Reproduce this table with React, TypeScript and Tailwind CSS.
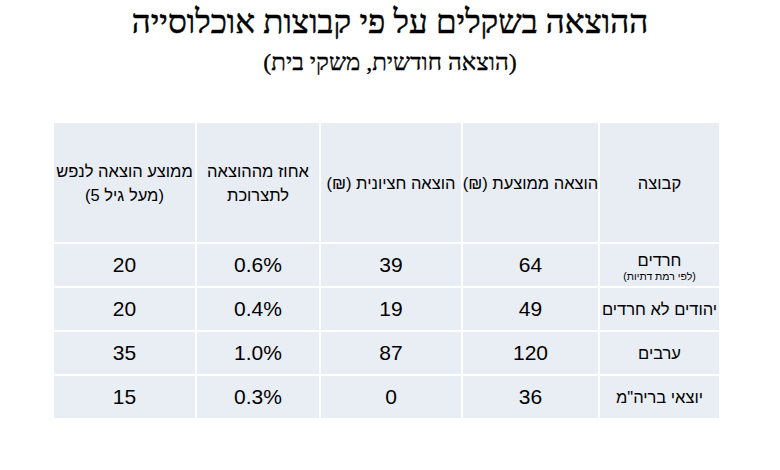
const columns = [
  { w: 'w-[121px]', lines: ['קבוצה'] },
  { w: 'w-[137px]', lines: ['הוצאה ממוצעת (₪)'] },
  { w: 'w-[142px]', lines: ['הוצאה חציונית (₪)'] },
  { w: 'w-[124px]', lines: ['אחוז מההוצאה', 'לתצרוכת'] },
  { w: 'w-[141px]', lines: ['ממוצע הוצאה לנפש', '(מעל גיל 5)'] },
];

const rows = [
  { group: 'חרדים', note: '(לפי רמת דתיות)', values: ['64', '39', '0.6%', '20'] },
  { group: 'יהודים לא חרדים', values: ['49', '19', '0.4%', '20'] },
  { group: 'ערבים', values: ['120', '87', '1.0%', '35'] },
  { group: 'יוצאי בריה"מ', values: ['36', '0', '0.3%', '15'] },
];

export default function App() {
  return (
    <div className="w-[780px] h-[470px] bg-white overflow-hidden">
      <div className="pt-[2px] text-center text-black font-['Liberation_Serif',serif]" dir="rtl">
        <h1 className="text-[33px] leading-[40px] [-webkit-text-stroke:0.5px_black]">ההוצאה בשקלים על פי קבוצות אוכלוסייה</h1>
        <p className="text-[24px] leading-[30px] mt-[5px] [-webkit-text-stroke:0.3px_black]">(הוצאה חודשית, משקי בית)</p>
      </div>

      <div
        dir="rtl"
        className="mt-[46px] ml-[52px] w-[667px] font-['Liberation_Sans',sans-serif] text-black"
      >
        {/* header */}
        <div className="flex h-[119px]">
          {columns.map((c, i) => (
            <div
              key={i}
              className={`${c.w} bg-[#e8ecf3] border-l-2 border-white last:border-l-0 flex flex-col items-center justify-center text-[16.5px] leading-[24px] whitespace-nowrap`}
            >
              {c.lines.map((l) => (
                <span key={l}>{l}</span>
              ))}
            </div>
          ))}
        </div>

        {/* body */}
        {rows.map((r) => (
          <div key={r.group} className="flex h-[44px] border-t-2 border-white">
            <div className={`${columns[0].w} bg-[#e9edf4] border-l-2 border-white flex flex-col items-center justify-center whitespace-nowrap`}>
              <span className={r.note ? 'text-[16.5px] leading-[20px] mt-[2px]' : 'text-[16.5px]'}>{r.group}</span>
              {r.note && <span className="text-[10.5px] leading-[13px]">{r.note}</span>}
            </div>
            {r.values.map((v, i) => (
              <div
                key={i}
                className={`${columns[i + 1].w} bg-[#e9edf4] border-l-2 border-white last:border-l-0 flex items-center justify-center text-[21px]`}
              >
                <span dir="ltr">{v}</span>
              </div>
            ))}
          </div>
        ))}
      </div>
    </div>
  );
}
